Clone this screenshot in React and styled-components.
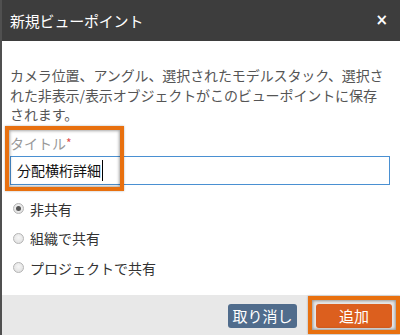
import React, { useState } from 'react';
import styled, { createGlobalStyle } from 'styled-components';

const GlobalStyle = createGlobalStyle`
    html, body {
        margin: 0;
        padding: 0;
        background: #ffffff;
    }
    body {
        font-family: "Noto Sans CJK JP", "Noto Sans", sans-serif;
    }
`;

const Dialog = styled.div`
    width: 400px;
    height: 335px;
    display: flex;
    flex-direction: column;
    box-sizing: border-box;
    border-left: 2px solid #505050;
    overflow: hidden;
    background: #fff;
`;

const Header = styled.div`
    height: 41px;
    flex: none;
    background: #3d3d3d;
    display: flex;
    align-items: center;
    justify-content: space-between;
    padding: 0 12px 0 8px;
    color: #fff;
`;

const Title = styled.div`
    font-size: 15px;
    letter-spacing: -0.2px;
`;

const Close = styled.div`
    font-family: "DejaVu Sans", sans-serif;
    font-size: 15px;
    font-weight: bold;
    line-height: 1;
`;

const Body = styled.div`
    flex: 1;
    padding: 25px 10px 0 8px;
`;

const Description = styled.p`
    margin: 0;
    font-size: 14px;
    line-height: 19.5px;
    color: #555;
    letter-spacing: -0.1px;
`;

const Field = styled.div`
    position: relative;
    margin-top: 8px;
`;

const Label = styled.div`
    font-size: 14px;
    line-height: 20px;
    color: #999;
    padding-bottom: 3px;
    span {
        color: #e05050;
        font-size: 12px;
        vertical-align: top;
    }
`;

const TitleInput = styled.div`
    height: 29px;
    box-sizing: border-box;
    border: 1px solid #4a90d2;
    display: flex;
    align-items: center;
    padding-left: 6px;
    font-size: 14px;
    color: #111;
`;

const Caret = styled.span`
    display: inline-block;
    width: 1px;
    height: 21px;
    background: #000;
    margin-left: 1px;
`;

const Highlight = styled.div`
    position: absolute;
    border: 4px solid #e8700f;
    box-shadow: inset 0 0 3px 1px rgba(0, 0, 0, 0.35), 0 0 2px rgba(0, 0, 0, 0.3);
    pointer-events: none;
    box-sizing: border-box;
`;

const RadioGroup = styled.div`
    display: flex;
    flex-direction: column;
    gap: 9px;
    margin-top: 14px;
`;

const RadioRow = styled.label`
    display: flex;
    align-items: center;
    gap: 6px;
    padding-left: 3px;
    font-size: 14px;
    line-height: 20.5px;
    color: #333;
    cursor: pointer;
`;

const RadioDot = styled.span`
    width: 11px;
    height: 11px;
    box-sizing: border-box;
    border-radius: 50%;
    border: 1px solid #b4b4b4;
    background: radial-gradient(circle at 50% 40%, #f6f6f6 0%, #dcdcdc 100%);
    display: flex;
    align-items: center;
    justify-content: center;
    &::after {
        content: '';
        width: 5px;
        height: 5px;
        border-radius: 50%;
        background: ${p => (p.$checked ? '#555' : 'transparent')};
    }
`;

const Footer = styled.div`
    height: 40px;
    flex: none;
    background: #e8e8e8;
    display: flex;
    align-items: center;
    justify-content: flex-end;
    gap: 19px;
    padding-right: 8px;
`;

const Button = styled.button`
    position: relative;
    height: 24px;
    width: ${p => p.$width}px;
    border: none;
    border-radius: 3px;
    background: ${p => (p.$primary ? '#dc5f1e' : '#506c8c')};
    color: #fff;
    font-family: inherit;
    font-size: 15px;
    padding: 0;
    margin-top: 1px;
    cursor: pointer;
`;

const options = ['非共有', '組織で共有', 'プロジェクトで共有'];

const App = () => {
    const [shared, setShared] = useState(0);

    return (
        <>
            <GlobalStyle />
            <Dialog>
                <Header>
                    <Title>新規ビューポイント</Title>
                    <Close>×</Close>
                </Header>
                <Body>
                    <Description>
                        カメラ位置、アングル、選択されたモデルスタック、選択された非表示/表示オブジェクトがこのビューポイントに保存されます。
                    </Description>
                    <Field>
                        <Label>タイトル<span>*</span></Label>
                        <TitleInput>分配横桁詳細<Caret /></TitleInput>
                        <Highlight style={{ left: -5, top: -7, width: 119, height: 65 }} />
                    </Field>
                    <RadioGroup>
                        {options.map((label, i) => (
                            <RadioRow key={label} onClick={() => setShared(i)}>
                                <RadioDot $checked={shared === i} />
                                {label}
                            </RadioRow>
                        ))}
                    </RadioGroup>
                </Body>
                <Footer>
                    <Button $width={69}>取り消し</Button>
                    <Button $primary $width={76}>
                        追加
                        <Highlight style={{ left: -8, top: -8, width: 92, height: 38 }} />
                    </Button>
                </Footer>
            </Dialog>
        </>
    );
};

export default App;
